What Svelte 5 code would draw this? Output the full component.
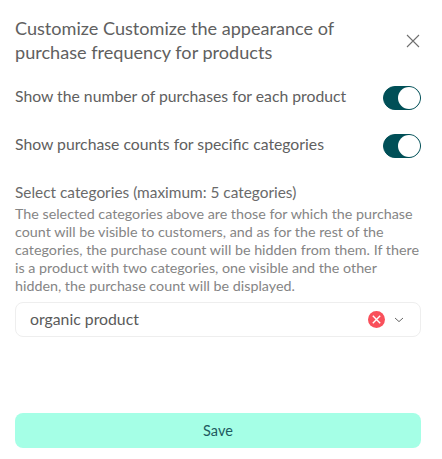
<script>
  let showAll = $state(true);
  let showCategories = $state(true);
</script>

<div class="modal">
  <header>
    <h2>Customize Customize the appearance of purchase frequency for products</h2>
    <button class="close" aria-label="Close">
      <svg width="14" height="14" viewBox="0 0 14 14"><path d="M1 1l12 12M13 1L1 13" stroke="#6f6f6f" stroke-width="1.1" fill="none" /></svg>
    </button>
  </header>

  <div class="row">
    <span>Show the number of purchases for each product</span>
    <button class="toggle" class:on={showAll} aria-label="Toggle purchases" onclick={() => (showAll = !showAll)}><i></i></button>
  </div>
  <div class="row">
    <span>Show purchase counts for specific categories</span>
    <button class="toggle" class:on={showCategories} aria-label="Toggle categories" onclick={() => (showCategories = !showCategories)}><i></i></button>
  </div>

  <div class="field">
    <div class="label">Select categories (maximum: 5 categories)</div>
    <p>The selected categories above are those for which the purchase count will be visible to customers, and as for the rest of the categories, the purchase count will be hidden from them. If there is a product with two categories, one visible and the other hidden, the purchase count will be displayed.</p>
    <div class="select">
      <span class="value">organic product</span>
      <span class="clear">
        <svg width="9" height="9" viewBox="0 0 9 9"><path d="M.8.8l7.4 7.4M8.2.8L.8 8.2" stroke="#fff" stroke-width="1.4" fill="none" /></svg>
      </span>
      <svg class="chev" width="10" height="6" viewBox="0 0 10 6"><path d="M1 1l4 3.6L9 1" stroke="#666" stroke-width="1" fill="none" /></svg>
    </div>
  </div>

  <button class="save">Save</button>
</div>

<style>
  :global(body) {
    margin: 0;
    background: #fff;
  }
  .modal {
    box-sizing: border-box;
    width: 442px;
    height: 459px;
    padding: 16px 21px 11px 15px;
    display: flex;
    flex-direction: column;
    font-family: Lato, "Noto Sans", sans-serif;
    color: #606060;
  }
  header {
    display: flex;
    align-items: center;
    justify-content: space-between;
    margin-bottom: 22px;
  }
  h2 {
    margin: 0;
    width: 345px;
    font-size: 18.1px;
    font-weight: 400;
    line-height: 24px;
    color: #606060;
  }
  .close {
    border: 0;
    background: none;
    padding: 0;
    display: flex;
    margin: 2px 1px 0 0;
  }
  .row {
    display: flex;
    align-items: center;
    justify-content: space-between;
    height: 24px;
    margin-bottom: 24px;
    font-size: 15.75px;
  }
  .row span {
    padding-bottom: 5px;
  }
  .toggle {
    box-sizing: border-box;
    width: 38px;
    height: 24px;
    border-radius: 12px;
    border: 1px solid #004f57;
    background: #fff;
    padding: 0;
    display: flex;
    justify-content: flex-end;
  }
  .toggle.on {
    background: #004f57;
  }
  .toggle i {
    display: block;
    width: 22px;
    height: 22px;
    border-radius: 50%;
    background: #fff;
  }
  .field {
    margin-top: 0;
  }
  .label {
    font-size: 15.4px;
    line-height: 20px;
    color: #6a6a6a;
  }
  p {
    margin: 3px 0 7px;
    font-size: 14.3px;
    line-height: 18px;
    color: #858585;
  }
  .select {
    box-sizing: border-box;
    height: 35px;
    border: 1px solid #eee;
    border-radius: 8px;
    display: flex;
    align-items: center;
    padding: 0 16px 0 14px;
  }
  .value {
    flex: 1;
    padding-bottom: 2px;
    font-size: 15.8px;
    color: #5a5a5a;
  }
  .clear {
    width: 17px;
    height: 17px;
    border-radius: 50%;
    background: #f9505b;
    display: flex;
    align-items: center;
    justify-content: center;
    margin-right: 9px;
  }
  .save {
    margin-top: auto;
    height: 35px;
    border: 0;
    border-radius: 8px;
    background: #a5ffe6;
    color: #1f5a60;
    font: inherit;
    font-size: 14.5px;
  }
</style>
